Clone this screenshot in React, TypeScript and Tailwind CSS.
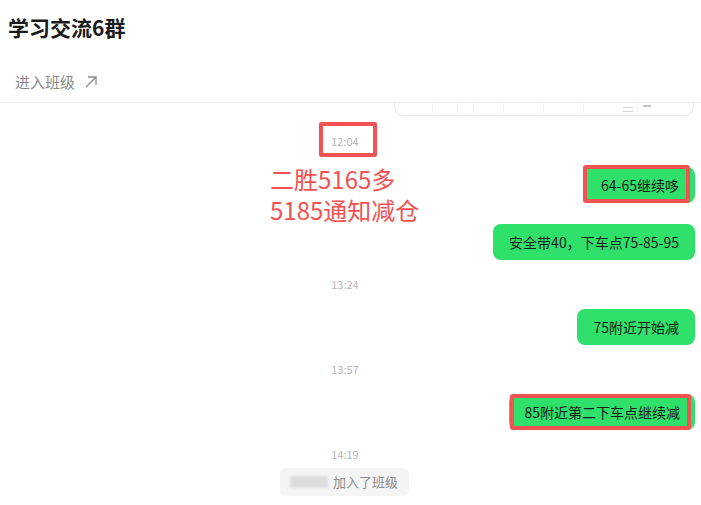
const font = { fontFamily: '"Noto Sans CJK SC", "Noto Sans", sans-serif' };

function Time({ t }: { t: string }) {
  return (
    <div className="pr-[11px] text-center text-[11px] leading-4 text-[#b5b5b5]">{t}</div>
  );
}

function Bubble({ text }: { text: string }) {
  return (
    <div className="flex justify-end pr-[6px]">
      <div className="rounded-lg bg-[#2fe06b] px-[16px] py-2 text-[14px] leading-5 text-[#1b1b1b]">
        {text}
      </div>
    </div>
  );
}

export default function App() {
  return (
    <div className="w-[701px] h-[505px] overflow-hidden bg-white" style={font}>
      {/* header */}
      <div className="flex h-[55px] items-center px-2 text-[21px] font-bold text-[#1a1a1a]">
        学习交流6群
      </div>
      <div className="h-[48px] border-b border-[#e8e8e8] pl-[15px] pt-[17px]">
        <div className="flex items-center gap-[10px] text-[15px] leading-5 text-[#8a8a8a]">
          <span>进入班级</span>
          <svg width="12" height="12" viewBox="0 0 12 12" fill="none" stroke="#8a8a8a" strokeWidth="1.3">
            <path d="M1 11 L11 1" />
            <path d="M3 1 H11 V9" />
          </svg>
        </div>
      </div>

      {/* chat */}
      <div className="flex flex-col">
        {/* bottom of a shared picture */}
        <div className="flex justify-end pr-[7px]">
          <div className="flex h-[13px] w-[300px] rounded-b-[10px] border-x border-b border-[#e6e6e6]">
            <div className="w-[38px] border-r border-[#f4f4f4]" />
            <div className="w-[25px] border-r border-[#f4f4f4]" />
            <div className="w-[16px] border-r border-[#f4f4f4]" />
            <div className="w-[30px] border-r border-[#f4f4f4]" />
            <div className="w-[40px] border-r border-[#f4f4f4]" />
            <div className="w-[40px] border-r border-[#f4f4f4]" />
            <div className="flex w-[54px] flex-col items-end justify-center gap-[3px] border-r border-[#f4f4f4] pr-1">
              <div className="h-[1px] w-[10px] bg-[#d4d4d4]" />
              <div className="h-[1px] w-[10px] bg-[#d4d4d4]" />
            </div>
            <div className="flex flex-1 items-start pl-[5px] pt-[2px]">
              <div className="h-[2px] w-[8px] bg-[#c4c4c4]" />
            </div>
          </div>
        </div>

        <div className="mt-[17px] pr-[11px] text-center text-[11px] leading-4 text-[#b5b5b5]">
          <span className="relative inline-block w-[50px]">
            12:04
            <span className="absolute -left-[1px] -top-[11px] h-[35px] w-[58px] rounded-[2px] border-4 border-[#f25252]" />
          </span>
        </div>

        <div className="relative mt-[18px] flex justify-end pr-[6px]">
          <div className="absolute left-[270px] -top-[4px] text-[24px] leading-[31px] text-[#f45151]">
            <div>二胜5165多</div>
            <div>5185通知减仓</div>
          </div>
          <div className="relative rounded-lg bg-[#2fe06b] px-[16px] py-2 text-[14px] leading-5 text-[#1b1b1b]">
            64-65继续哆
            <span className="absolute -left-[2px] -top-[2px] right-[5px] bottom-0 rounded-[3px] border-4 border-[#f25252]" />
          </div>
        </div>

        <div className="mt-[21px]">
          <Bubble text="安全带40，下车点75-85-95" />
        </div>

        <div className="mt-4 mb-[17px]">
          <Time t="13:24" />
        </div>
        <Bubble text="75附近开始减" />

        <div className="mt-4 mb-[17px]">
          <Time t="13:57" />
        </div>
        <div className="flex justify-end pr-[6px]">
          <div className="relative rounded-lg bg-[#2fe06b] px-[15px] py-2 text-[14px] leading-5 text-[#1b1b1b]">
            85附近第二下车点继续减
            <span className="absolute left-[1px] top-0 right-[4px] bottom-0 rounded-[3px] border-4 border-[#f25252]" />
          </div>
        </div>

        <div className="mt-4 mb-[6px]">
          <Time t="14:19" />
        </div>
        <div className="flex justify-center pr-[12px]">
          <div className="flex h-[28px] items-center gap-[5px] rounded-md bg-[#f4f4f4] pl-[10px] pr-[11px] text-[13px] text-[#8c8c8c]">
            <span className="h-[12px] w-[38px] bg-[#dcdcdc] blur-[1.5px]" />
            <span>加入了班级</span>
          </div>
        </div>
      </div>
    </div>
  );
}
